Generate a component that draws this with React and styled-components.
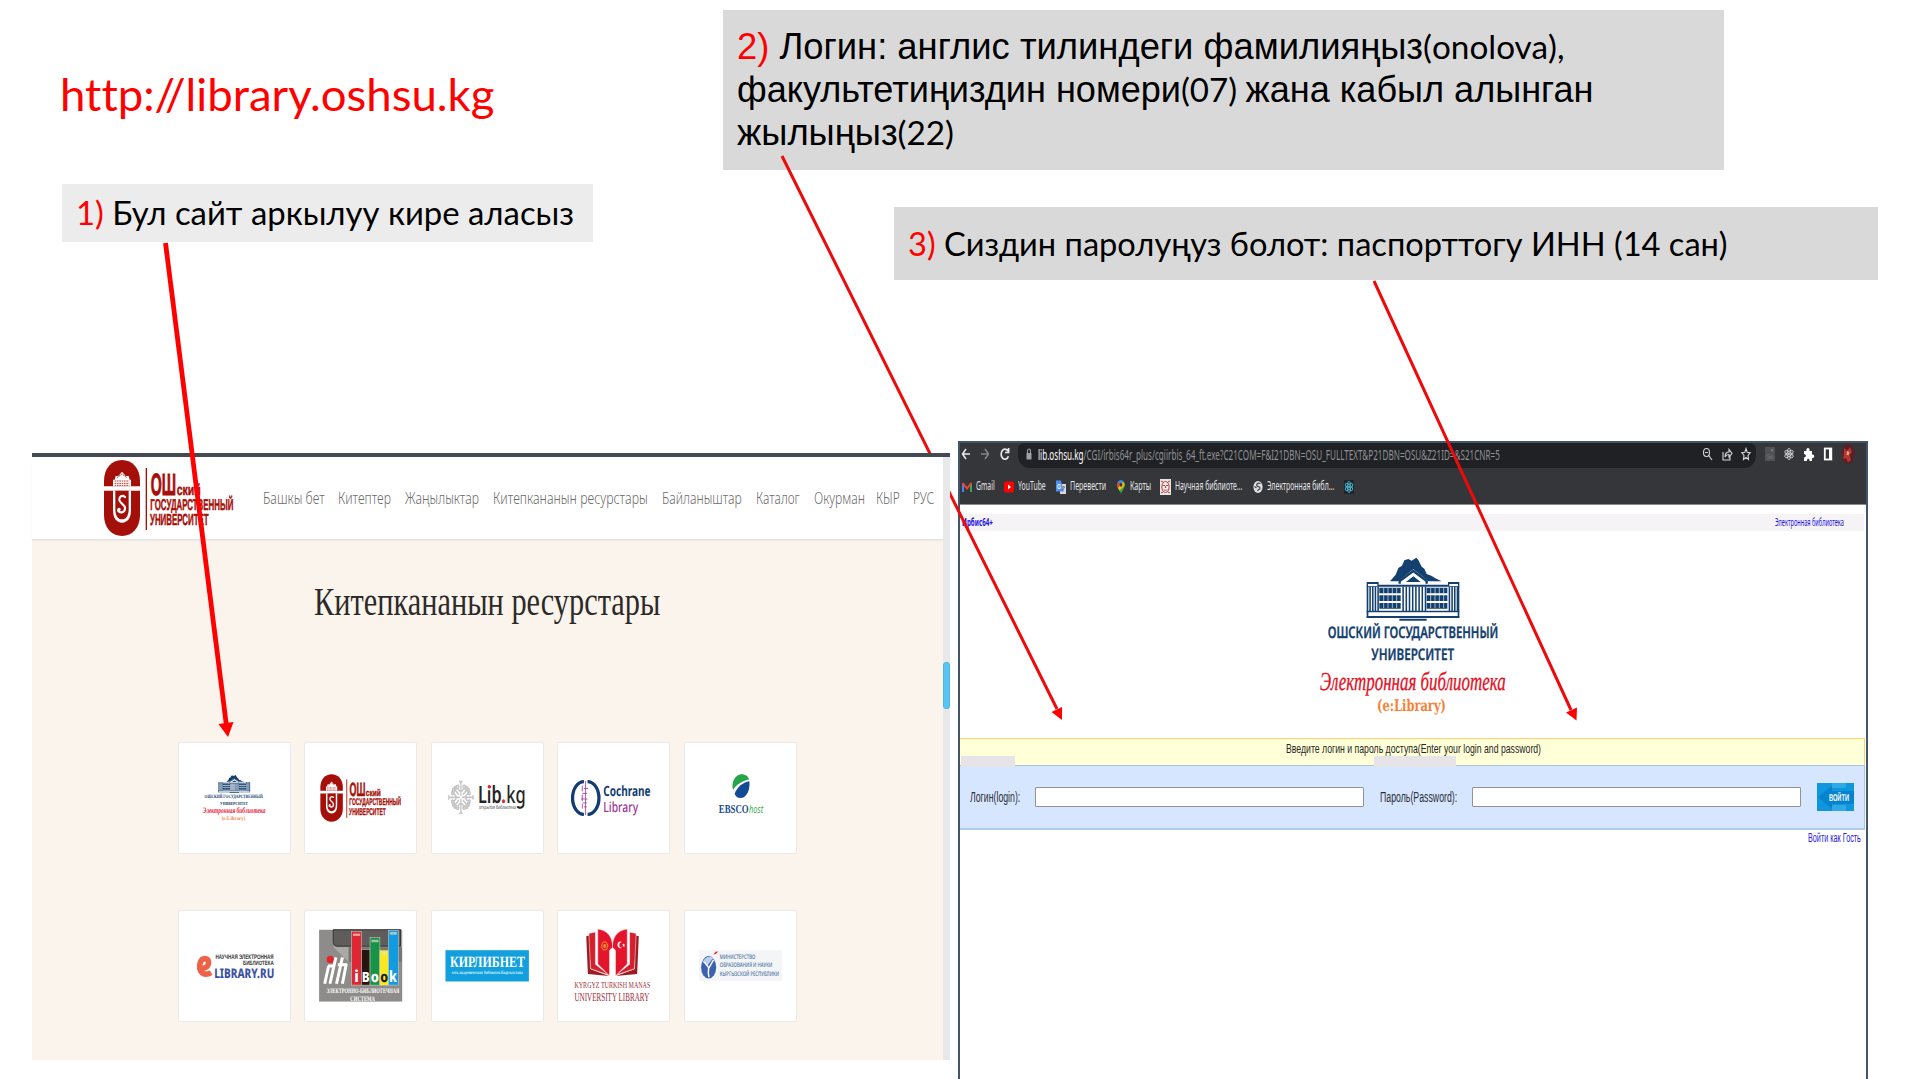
import React, { useLayoutEffect, useRef, useState } from "react";
import styled, { createGlobalStyle } from "styled-components";

const GlobalStyle = createGlobalStyle`
  * { box-sizing: border-box; }
  html, body { margin: 0; padding: 0; background: #fff; }
  svg text { text-rendering: geometricPrecision; }
`;

const calibri = `Lato, "Noto Sans", sans-serif`;
const arial = `"Liberation Sans", Arial, sans-serif`;
const noto = `"Noto Sans", sans-serif`;
const serif = `"Liberation Serif", serif`;

/* ---------- text that is squeezed to a given width ---------- */
const FitBox = styled.span`
  display: block;
  flex: none;
  width: ${(p) => p.$w}px;
  margin-left: ${(p) => p.$ml || 0}px;
  white-space: nowrap;
  overflow: visible;
`;
const FitInner = styled.span`
  display: inline-block;
  transform-origin: 0 50%;
  vertical-align: top;
`;
function Fit({ w, ml, children }) {
  const ref = useRef(null);
  const [k, setK] = useState(1);
  useLayoutEffect(() => {
    const n = ref.current.offsetWidth;
    if (n) setK(w / n);
  }, [w]);
  return (
    <FitBox $w={w} $ml={ml}>
      <FitInner ref={ref} style={{ transform: `scaleX(${k})` }}>{children}</FitInner>
    </FitBox>
  );
}

/* ---------- slide ---------- */
const Slide = styled.main`
  position: relative;
  width: 1919px;
  height: 1079px;
  overflow: hidden;
  background: #fff;
  display: flex;
  flex-direction: column;
  font-family: ${calibri};
  font-variant-ligatures: none;
  color: #000;
`;
const Top = styled.section`
  display: flex;
  height: 441px;
  flex: none;
`;
const TopLeft = styled.div`
  width: 723px;
  flex: none;
  padding: 66px 0 0 62px;
`;
const TopRight = styled.div`
  flex: 1;
  padding-top: 10px;
`;
const SiteUrl = styled.div`
  height: 118px;
  margin-left: -2px;
  color: #ff0000;
  font-size: 45px;
  line-height: 56px;
`;
const Note = styled.div`
  width: ${(p) => p.$w}px;
  height: ${(p) => p.$h}px;
  margin: ${(p) => p.$m || "0"};
  padding: ${(p) => p.$p};
  background: ${(p) => p.$bg};
  font-size: 33px;
  line-height: 43px;
`;
const Red = styled.span`color: #ff0000;`;
const Ar = styled.span`
  font-family: ${arial};
  font-size: 36px;
  line-height: 1;
`;
const Bottom = styled.section`
  display: flex;
  align-items: flex-start;
  padding-left: 32px;
  gap: 8px;
`;
const Arrows = styled.svg`
  position: absolute;
  inset: 0;
  width: 1919px;
  height: 1079px;
  z-index: ${(p) => p.$z};
  pointer-events: none;
`;

/* ---------- library site ---------- */
const Site = styled.div`
  position: relative;
  z-index: 2;
  width: 918px;
  height: 607px;
  margin-top: 12px;
  background: #fbf4ed;
  border-top: 4px solid #434a54;
  display: flex;
`;
const SitePage = styled.div`width: 911px; flex: none;`;
const SiteScroll = styled.div`
  width: 7px;
  background: #e9e8e8;
  padding-top: 205px;
`;
const Thumb = styled.div`
  height: 47px;
  border-radius: 3px;
  background: #58c6f4;
  border: 1px solid #52b4dc;
`;
const SiteHeader = styled.header`
  display: flex;
  height: 83px;
  padding-left: 68px;
  background: #fff;
  border-bottom: 1px solid #dfe1e5;
  box-shadow: 0 1px 2px rgba(0, 0, 0, 0.05);
`;
const HeaderLogo = styled.svg`
  width: 140px;
  height: 82px;
  flex: none;
`;
const Nav = styled.nav`
  display: flex;
  padding: 30px 0 0 23px;
  font-family: ${noto};
  font-weight: 300;
  font-size: 15.5px;
  line-height: 22px;
  color: #6c6c6c;
`;
const Title = styled.h1`
  margin: 0;
  padding: 39px 0 0 282px;
  height: 202px;
  font-family: ${serif};
  font-weight: 400;
  font-size: 40px;
  line-height: 46px;
  color: #2c2a28;
`;
const Cards = styled.div`
  display: grid;
  grid-template-columns: repeat(5, 113px);
  grid-auto-rows: 112px;
  column-gap: 13.4px;
  row-gap: 56px;
  padding-left: 146px;
`;
const Card = styled.div`
  background: #fff;
  border: 1px solid #ece9e6;
  border-radius: 2px;
`;
const CardArt = styled.svg`
  display: block;
  width: 111px;
  height: 110px;
`;

/* ---------- browser ---------- */
const Browser = styled.div`
  width: 910px;
  height: 660px;
  background: #fff;
  border: 2px solid #44546a;
  font-family: ${noto};
`;
const Chrome = styled.div`
  height: 62px;
  background: #35363a;
  border-bottom: 1px solid #8a8b8d;
`;
const ToolRow = styled.div`
  display: flex;
  height: 25px;
`;
const ToolSvg = styled.svg`
  height: 25px;
  width: ${(p) => p.$w}px;
  flex: none;
`;
const Address = styled.div`
  display: flex;
  width: 738px;
  flex: none;
  background: #202124;
  border-radius: 6px 6px 12px 12px;
  color: #8f9195;
  font-size: 14.5px;
  line-height: 23px;
`;
const Host = styled.span`color: #fff;`;
const AddressGap = styled.div`flex: 1;`;
const Bookmarks = styled.div`
  display: flex;
  height: 36px;
  padding-left: 2px;
  color: #e4e5e7;
  font-size: 12.5px;
  line-height: 36px;
`;
const BmIcon = styled.svg`
  width: ${(p) => p.$w || 10}px;
  height: 16px;
  margin: 10.5px ${(p) => p.$mr}px 0 ${(p) => p.$ml || 0}px;
  flex: none;
`;
const Strip = styled.div`
  display: flex;
  justify-content: space-between;
  width: 904px;
  height: 17px;
  margin-top: 9px;
  padding: 0 20px 0 2px;
  background: #f6f3f6;
  color: #1c10e0;
  font-family: ${noto};
  font-size: 10px;
  line-height: 16px;
`;
const StrongLink = styled.b`font-weight: 700;`;
const Brand = styled.div`
  height: 207px;
  padding-left: 350px;
`;
const BrandArt = styled.svg`
  display: block;
  width: 220px;
  height: 207px;
`;
const Login = styled.form`
  position: relative;
  margin: 0;
  width: 905px;
`;
const Prompt = styled.div`
  height: 27px;
  padding: 0 0 0 326px;
  border: 1px solid #ffcf70;
  border-bottom: 0;
  border-left: 0;
  background: #ffffd8;
  color: #262626;
  font-family: ${arial};
  font-size: 13.5px;
  line-height: 19px;
`;
const Fields = styled.div`
  display: flex;
  align-items: center;
  height: 65px;
  padding: 0 10px 1px 10px;
  border: 1px solid #a9c3e2;
  border-left: 0;
  border-bottom: 2px solid #b0c9f2;
  background: #d7e6ff;
  color: #2b2f36;
  font-family: ${arial};
  font-size: 14px;
  line-height: 20px;
`;
const Input = styled.input`
  width: 329px;
  height: 20px;
  margin: 0 16px 0 15px;
  padding: 0;
  flex: none;
  border: 1px solid #909397;
  border-radius: 1px;
  background: #fff;
`;
const Enter = styled.button`
  width: 37px;
  height: 28px;
  padding: 0;
  border: 0;
  background: none;
  flex: none;
`;
const Mask = styled.div`
  position: absolute;
  top: 18px;
  left: ${(p) => p.$x}px;
  width: ${(p) => p.$w}px;
  height: 11px;
  background: #e6e4e6;
`;
const Guest = styled.div`
  display: flex;
  justify-content: flex-end;
  padding: 1px 4px 0 0;
  color: #2d20d8;
  font-family: ${arial};
  font-size: 12px;
  line-height: 15px;
`;

/* squeezed svg label */
function T({ x, y, w, s, f = arial, c, b, i, k, children }) {
  return (
    <text x={x} y={y} textLength={w} lengthAdjust="spacingAndGlyphs" fontSize={s} fontFamily={f}
      fill={c} stroke={k ? c : "none"} strokeWidth={k || 0}
      fontWeight={b || 400} fontStyle={i ? "italic" : "normal"}>{children}</text>
  );
}

function OshLogo() {
  const r = "#a50f0a";
  return (
    <g>
      <path d="M252 139V122C252 85 275 60 306 60s54 25 54 62v17z" fill={r} />
      <path d="M252 152h108v74c0 37-23 62-54 62s-54-25-54-62z" fill={r} />
      <path d="M279 152h54v58c0 25-11 38-27 38s-27-13-27-38z" fill="#fff" />
      <path d="M286 152h40v55c0 21-8 31-20 31s-20-10-20-31z" fill={r} />
      <path d="M279 139v-20h5l3-11h8l11-13 11 13h9l3 11h4v20z" fill="#fff" />
      <path d="M284 123h44M284 130h44M284 136h44M291 113l15-11 15 11" stroke={r} strokeWidth="2.4" fill="none" strokeDasharray="5 2" />
      <path d="M315 171c-8-7-18-2-17 9 1 10 17 13 17 25 0 13-14 16-21 7" fill="none" stroke="#fff" strokeWidth="6.5" strokeLinecap="round" />
      <circle cx="297" cy="208" r="5" fill="#fff" />
      <rect x="377" y="84" width="4" height="186" fill={r} />
      <T x={392} y={165} w={76} s={92} c={r} b={700} k={3}>ОШ</T>
      <T x={470} y={165} w={72} s={46} c={r} b={700} k={1.5}>ский</T>
      <T x={391} y={210} w={249} s={47} c={r} b={700} k={1.5}>ГОСУДАРСТВЕННЫЙ</T>
      <T x={390} y={256} w={176} s={48} c={r} b={700} k={1.5}>УНИВЕРСИТЕТ</T>
    </g>
  );
}

function Building() {
  const n = "#14406f";
  const cols = [];
  for (let i = 0; i < 4; i++) cols.push(328 + i * 8, 566 + i * 8);
  for (let i = 0; i < 8; i++) cols.push(427 + i * 9.6);
  return (
    <g fill={n}>
      <path d="M390 124l17-20 8-20 11-7 7-16 12-4 10 5 14-9 6 7 10 20 8 6 7 16 14 5 12 8 19 9z" />
      <path d="M412 126l48-38 48 38v12h-96z" fill="#fff" />
      <path d="M419 131v-8l41-30 40 30v8" fill="none" stroke={n} strokeWidth="7" />
      <path d="M438 126l22-17 22 17z" />
      <path d="M320 126h36v8h208v-8h34v14H320z" />
      <path d="M324 132h28v6h-28zM568 132h26v6h-26z" fill="#fff" />
      <path d="M320 138h5v95h-5zM593 138h5v95h-5z" />
      {cols.map((x) => <rect key={x} x={x} y="140" width="4.6" height="74" />)}
      {[143, 166, 189].map((y) => (
        <path key={y} d={`M358 ${y}h64v17h-64zM500 ${y}h62v17h-62z`} />
      ))}
      <path d="M371 144v60M384 144v60M397 144v60M410 144v60M512 144v60M525 144v60M538 144v60M551 144v60" stroke="#fff" strokeWidth="1.8" />
      <path d="M320 212h278v5H320zM320 228h278v6H320zM418 236h82v6h-82z" />
    </g>
  );
}

function BookHalf({ flip }) {
  return (
    <g transform={flip ? "translate(736 0) scale(-1 1)" : undefined}>
      <path d="M288 708l12-3v102l57 21-64-6z" fill="#9c1c22" />
      <path d="M296 699l20-4v98l42 33-57-20z" fill="#d51f2d" stroke="#fff" strokeWidth="1.5" />
      <path d="M323 686c27 3 43 20 45 48v8l-9 8v78l-36-36z" fill="#e5142d" stroke="#fff" strokeWidth="1.5" />
    </g>
  );
}

const logos = [
  ["elib", "25 127 338 334",
    <g>
      <g transform="translate(34 209) scale(.347 .29)"><Building /></g>
      <T x={103} y={294} w={177} s={15} f={serif} c="#14406f" b={700}>ОШСКИЙ ГОСУДАРСТВЕННЫЙ</T>
      <T x={150} y={314} w={85} s={14} f={serif} c="#14406f" b={700}>УНИВЕРСИТЕТ</T>
      <T x={97} y={341} w={191} s={25} f={serif} c="#e8213c" b={700} i>Электронная библиотека</T>
      <T x={155} y={360} w={72} s={17} f={serif} c="#f5854a" b={700}>(e:Library)</T>
    </g>],
  ["osu", "404 127 338 334",
    <g transform="translate(291 184) scale(.634 .632)"><OshLogo /></g>],
  ["libkg", "784 127 338 334",
    <g>
      <g fill="none" stroke="#c3c3c3" strokeWidth="5">
        {[0, 90, 180, 270].map((a) => (
          <g key={a} transform={`translate(872 292) scale(.78 1) rotate(${a})`}>
            <path d="M0-4V-48M0-44l-6-6M0-44l6-6M0-18c-10-2-14-12-6-16M0-18c10-2 14-12 6-16M-8-36c-14-2-16 12-8 12M8-36c14-2 16 12 8 12" />
            <path d="M8-8L28-28M14-24c0-14 18-10 12 0M24-14c14 0 10-18 0-12" />
          </g>
        ))}
      </g>
      <T x={924} y={309} w={72} s={72} f={noto} c="#252525" b={600}>Lib</T>
      <circle cx="959" cy="260" r="5" fill="#e23" />
      <T x={995} y={309} w={14} s={72} f={noto} c="#e0202c" b={700}>.</T>
      <T x={1010} y={309} w={59} s={72} f={noto} c="#252525" b={500}>kg</T>
      <T x={927} y={328} w={113} s={15} f={noto} c="#444">открытая библиотека</T>
    </g>],
  ["cochrane", "202 127 338 334",
    <g>
      <path d="M281 244a34 49 0 0 0 0 100M292 244a34 49 0 0 1 0 100" fill="none" stroke="#123c72" strokeWidth="10" />
      <path d="M286 242v104M276 256v18M276 284v20M276 312v14M281 265h13M276 280h15M272 297h20M277 309h12M281 321h9" stroke="#a53d9a" strokeWidth="2.6" fill="none" />
      <T x={340} y={287} w={144} s={43} f={noto} c="#123c72" b={700}>Cochrane</T>
      <T x={340} y={336} w={106} s={43} f={noto} c="#9a3596" b={500}>Library</T>
    </g>],
  ["ebsco", "581 127 338 334",
    <g>
      <path d="M727 270c-6-26 8-48 27-48 12 0 20 7 22 16-17 2-39 15-49 32z" fill="#27a34b" />
      <path d="M732 281c9-22 24-34 45-38 3 27-9 51-27 51-9 0-15-5-18-13z" fill="#124a96" />
      <T x={684} y={339} w={91} s={37} f={serif} c="#1c4e8c" b={700}>EBSCO</T>
      <T x={776} y={339} w={43} s={33} f={noto} c="#45ab50" i>host</T>
    </g>],
  ["elibrary", "25 631 338 334",
    <g>
      <path d="M84 806c18 2 32-5 31-20-1-14-20-14-25 1-8 27 9 44 33 31" fill="none" stroke="#ee6249" strokeWidth="17" />
      <T x={136} y={777} w={177} s={20} c="#333" b={700}>НАУЧНАЯ ЭЛЕКТРОННАЯ</T>
      <T x={220} y={796} w={93} s={19} c="#333" b={700}>БИБЛИОТЕКА</T>
      <T x={132} y={834} w={183} s={40} f={noto} c="#3d51a4" b={800}>LIBRARY.RU</T>
    </g>],
  ["ibook", "404 631 338 334",
    <g>
      <rect x="447" y="688" width="253" height="218" fill="#8d8c8a" />
      <path d="M447 688h44v54l46 44v-46h162v-52H447z" fill="#aaa9a6" />
      <path d="M490 688h205v50H502q-12 0-12-14z" fill="#5f5d5c" stroke="#343332" strokeWidth="3" />
      <path d="M537 742h162v44H537z" fill="#777573" />
      <g stroke="#ddd9ce" strokeWidth="1.5">
        <rect x="546" y="693" width="30" height="163" fill="#df2733" />
        <rect x="576" y="748" width="26" height="108" fill="#251612" />
        <rect x="602" y="712" width="30" height="144" fill="#179348" />
        <rect x="632" y="751" width="26" height="105" fill="#fbe821" />
        <rect x="658" y="690" width="30" height="166" fill="#119be0" />
      </g>
      <path d="M550 699h22v8h-22zM606 718h22v8h-22zM636 757h18v7h-18zM662 695h22v8h-22z" fill="#e5e1d0" opacity=".65" />
      <circle cx="481" cy="778" r="11" fill="#e4232d" />
      <path d="M476 798l-12 54M498 772l-18 80M518 772l-18 80M530 790l-12 62M474 798h20M504 794h28" stroke="#fff" strokeWidth="9" fill="none" />
      <T x={554} y={847} w={14} s={50} f={noto} c="#fff" b={800}>i</T>
      <T x={577} y={847} w={24} s={43} f={noto} c="#fff" b={800}>B</T>
      <T x={604} y={847} w={25} s={45} f={noto} c="#fff" b={800}>o</T>
      <T x={633} y={847} w={24} s={45} f={noto} c="#1b1b1b" b={800}>o</T>
      <T x={660} y={847} w={24} s={48} f={noto} c="#fff" b={800}>k</T>
      <T x={469} y={879} w={222} s={21} f={serif} c="#fff" b={700}>ЭЛЕКТРОННО-БИБЛИОТЕЧНАЯ</T>
      <T x={542} y={903} w={75} s={21} f={serif} c="#fff" b={700}>СИСТЕМА</T>
    </g>],
  ["kirlibnet", "784 631 338 334",
    <g>
      <rect x="825" y="750" width="254" height="95" fill="#129fdd" />
      <T x={839} y={802} w={228} s={48} f={serif} c="#fff" b={700}>КИРЛИБНЕТ</T>
      <T x={844} y={823} w={216} s={15} f={serif} c="#d9f1fc" b={700}>сеть академических библиотек Кыргызстана</T>
    </g>],
  ["manas", "202 631 338 334",
    <g>
      <BookHalf />
      <BookHalf flip />
      <ellipse cx="344" cy="737" rx="9" ry="12" fill="none" stroke="#f4a133" strokeWidth="4" strokeDasharray="3 1.5" />
      <ellipse cx="344" cy="737" rx="4" ry="6" fill="#f4a133" />
      <path d="M395 725c-14-6-16 22 0 18-9-1-9-17 0-18z" fill="#fff" stroke="#fff" />
      <path d="M402 729l1 4h4l-3 3 1 4-3-2-3 2 1-4-3-3h4z" fill="#fff" />
      <T x={252} y={866} w={231} s={28} f={serif} c="#9d2c35">KYRGYZ TURKISH MANAS</T>
      <T x={252} y={905} w={228} s={37} f={serif} c="#9d2c35">UNIVERSITY LIBRARY</T>
    </g>],
  ["ministry", "581 631 338 334",
    <g>
      <rect x="624" y="750" width="253" height="93" fill="#f4f5f7" />
      <ellipse cx="653" cy="802" rx="23" ry="34" fill="#3b62ad" />
      <path d="M634 786c9-16 22-20 33-12l-17 22z" fill="#b9cfec" />
      <path d="M640 786l14 18 14-25M653 804c-2 14-1 22 1 28" stroke="#fff" strokeWidth="4.500" fill="none" />
      <path d="M667 764l7-9 8-1-6 7z" fill="#e0343b" />
      <T x={687} y={777} w={108} s={19} f={noto} c="#47719e" b={500}>МИНИСТЕРСТВО</T>
      <T x={687} y={802} w={160} s={19} f={noto} c="#47719e" b={500}>ОБРАЗОВАНИЯ И НАУКИ</T>
      <T x={687} y={827} w={180} s={19} f={noto} c="#47719e" b={500}>КЫРГЫЗСКОЙ РЕСПУБЛИКИ</T>
    </g>],
];

const nav = [
  ["Башкы бет", 62, 0], ["Китептер", 53, 13], ["Жаңылыктар", 74, 14],
  ["Китепкананын ресурстары", 155, 14], ["Байланыштар", 80, 14],
  ["Каталог", 44, 14], ["Окурман", 51, 14], ["КЫР", 24, 11], ["РУС", 21, 13],
];

const Atom = ({ c }) => (
  <g fill="none" stroke={c} strokeWidth=".8">
    {[0, 60, 120].map((a) => <ellipse key={a} rx="5" ry="2" transform={`rotate(${a + 30})`} />)}
    <circle r=".8" fill={c} />
  </g>
);

export default function App() {
  return (
    <Slide>
      <GlobalStyle />
      <Top>
        <TopLeft>
          <SiteUrl><Fit w={434}>http://library.oshsu.kg</Fit></SiteUrl>
          <Note $w={531} $h={58} $bg="#ececec" $p="7px 0 0 14px">
            <Fit w={498}><Red>1)</Red> Бул сайт аркылуу кире аласыз</Fit>
          </Note>
        </TopLeft>
        <TopRight>
          <Note $w={1001} $h={160} $bg="#d9d9d9" $p="15px 0 0 14px">
            <Fit w={827}><Ar><Red>2)</Red> Логин: англис тилиндеги фамилияңыз</Ar>(onolova),</Fit>
            <Fit w={856}><Ar>факультетиңиздин номери</Ar>(07) <Ar>жана кабыл алынган</Ar></Fit>
            <Fit w={217}><Ar>жылыңыз</Ar>(22)</Fit>
          </Note>
          <Note $w={984} $h={73} $bg="#d9d9d9" $m="37px 0 0 171px" $p="15px 0 0 14px">
            <Fit w={819}><Red>3)</Red> Сиздин паролуңуз болот: паспорттогу ИНН (14 сан)</Fit>
          </Note>
        </TopRight>
      </Top>

      <Bottom>
        <Site>
          <SitePage>
            <SiteHeader>
              <HeaderLogo viewBox="240 51 420 246"><OshLogo /></HeaderLogo>
              <Nav>{nav.map(([t, w, ml]) => <Fit key={t} w={w} ml={ml}>{t}</Fit>)}</Nav>
            </SiteHeader>
            <Title><Fit w={346}>Китепкананын ресурстары</Fit></Title>
            <Cards>
              {logos.map(([id, vb, art]) => (
                <Card key={id}><CardArt viewBox={vb} preserveAspectRatio="none">{art}</CardArt></Card>
              ))}
            </Cards>
          </SitePage>
          <SiteScroll><Thumb /></SiteScroll>
        </Site>

        <Browser>
          <Chrome>
            <ToolRow>
              <ToolSvg $w={58} viewBox="0 0 58 25">
                <g fill="none" strokeWidth="1.5">
                  <path d="M10 11H3M6 6l-3.500 5L6 16" stroke="#e8eaed" />
                  <path d="M21 11h7M25 6l3.500 5L25 16" stroke="#84868a" />
                  <path d="M48 8.200a3.800 5 0 1 0 .4 5M48.600 5v4.500H45" stroke="#e8eaed" strokeWidth="1.700" />
                </g>
              </ToolSvg>
              <Address>
                <ToolSvg $w={20} viewBox="0 0 20 25">
                  <rect x="8.500" y="10" width="5" height="6.500" fill="#9aa0a6" />
                  <path d="M9.500 10V8a1.500 2 0 0 1 3 0v2" fill="none" stroke="#9aa0a6" strokeWidth="1.100" />
                </ToolSvg>
                <Fit w={462}><Host>lib.oshsu.kg</Host>/CGI/irbis64r_plus/cgiirbis_64_ft.exe?C21COM=F&amp;I21DBN=OSU_FULLTEXT&amp;P21DBN=OSU&amp;Z21ID=&amp;S21CNR=5</Fit>
                <AddressGap />
                <ToolSvg $w={60} viewBox="0 0 60 25">
                  <g fill="none" stroke="#d5d7da" strokeWidth="1.100">
                    <ellipse cx="10.500" cy="9.500" rx="3" ry="4" />
                    <path d="M12.700 12.500L16 17M9 9.500h3" />
                    <path d="M27 9v8h7v-4M29 14c0-4 2-5 4-5V6.500l3 4-3 3.500v-2.500c-2 0-3 .5-4 2.500z" />
                    <path d="M50 5.500l1.200 3.800 3 .4-2.200 2.700.5 4-2.500-2-2.500 2 .5-4-2.200-2.700 3-.4z" />
                  </g>
                </ToolSvg>
              </Address>
              <ToolSvg $w={108} viewBox="0 0 108 25">
                <rect x="9" y="4" width="10" height="14" fill="#505154" />
                <T x={10.5} y={16} w={7} s={7} c="#777">Se</T>
                <rect x="15" y="6" width="2" height="2.500" fill="#777" />
                <g transform="translate(33 11) scale(.95 1.150)"><Atom c="#d8dadd" /></g>
                <path d="M48 8h2.500c-1-4 4-4 3 0H56v3.500c3-.5 3 4 0 3.500V18h-2.500c.5-3-3-3-2.500 0H48v-3.500c2.500 0 2.500-3.500 0-3.500z" fill="#fff" />
                <rect x="68.800" y="5.500" width="6.500" height="11" fill="none" stroke="#fff" strokeWidth="1.800" />
                <rect x="73" y="5" width="3" height="12" fill="#fff" />
                <ellipse cx="92" cy="11" rx="6.500" ry="10" fill="#5b2023" />
                <path d="M88 5l3 3 3-4 2 5-2.500 3 1.500 5-3 2.500-2-4.500-3 1 1-5z" fill="#b5352f" />
                <path d="M91 8l2.500 1-1 3.500-2-1z" fill="#e8a794" />
              </ToolSvg>
            </ToolRow>
            <Bookmarks>
              <BmIcon $mr={4} viewBox="0 0 10 16">
                <path d="M1 13V4.500" stroke="#4285f4" strokeWidth="2" />
                <path d="M9 13V4.500" stroke="#34a853" strokeWidth="2" />
                <path d="M.5 4L5 9.500 9.500 4" fill="none" stroke="#ea4335" strokeWidth="2" />
              </BmIcon>
              <Fit w={18.5}>Gmail</Fit>
              <BmIcon $ml={9.5} $mr={4} viewBox="0 0 10 16">
                <rect y="2.500" width="10" height="11" rx="2" fill="#f00" /><path d="M4 5.500l3 2.500-3 2.500z" fill="#fff" />
              </BmIcon>
              <Fit w={28}>YouTube</Fit>
              <BmIcon $ml={10} $mr={4} viewBox="0 0 10 16">
                <rect x="4" y="5" width="6" height="10" fill="#d6d9de" />
                <path d="M0 1.500h5l2.500 11H0z" fill="#4d8df5" />
                <T x={1} y={9.5} w={4} s={7} c="#fff" b={700}>G</T>
                <path d="M6 8h3M7.500 7v1M6.500 12l2-4" stroke="#667" strokeWidth=".8" />
              </BmIcon>
              <Fit w={36}>Перевести</Fit>
              <BmIcon $ml={10} $mr={4} viewBox="0 0 10 16">
                <path d="M5 15C4 11 1.200 10 1.200 5.800 1.200 3 3 1.300 5 1.300s3.800 1.700 3.800 4.500C8.800 10 6 11 5 15z" fill="#34a853" />
                <path d="M1.500 4C2 2.300 3.300 1.300 5 1.300L7.800 3 3 8.500z" fill="#4285f4" />
                <path d="M1.300 5L3 3l1.500 3L2 9C1.400 8 1.100 6.500 1.300 5z" fill="#ea4335" />
                <path d="M2 9l5-6 1.700 2C8.500 8 5 10 3.500 11.500z" fill="#fbbc04" />
                <ellipse cx="5" cy="5.800" rx="1.400" ry="1.900" fill="#35363a" />
              </BmIcon>
              <Fit w={21}>Карты</Fit>
              <BmIcon $ml={9} $mr={4} $w={11} viewBox="0 0 11 16">
                <rect width="11" height="16" fill="#e9e4e0" />
                <ellipse cx="5.500" cy="8" rx="3.600" ry="5.500" fill="#f6ecea" stroke="#b33b3b" strokeWidth="1" />
                <path d="M3 6.500h2M6 6.500h2M3.700 10.500c1 1 2.600 1 3.600 0M5.500 7v2M1 2l2 1M10 2L8 3M1 14l2-1M10 14l-2-1" stroke="#8d3434" strokeWidth=".9" fill="none" />
              </BmIcon>
              <Fit w={67.5}>Научная библиоте...</Fit>
              <BmIcon $ml={10} $mr={4} viewBox="0 0 10 16">
                <ellipse cx="5" cy="8" rx="4.600" ry="6" fill="#dfe1e3" />
                <path d="M7.500 4.500C5 3.500 3 5 4 7c1 1 3 0 3 2s-2 1-2.500 3M1.500 7.500l2 1.500" stroke="#45464a" strokeWidth="1.300" fill="none" />
              </BmIcon>
              <Fit w={67.5}>Электронная библ...</Fit>
              <BmIcon $ml={10} $mr={0} viewBox="0 0 10 16">
                <rect y="1" width="10" height="14" rx="1" fill="#20232a" />
                <g transform="translate(5 8) scale(.85 1.150)"><Atom c="#4fc3e0" /></g>
              </BmIcon>
            </Bookmarks>
          </Chrome>
          <Strip>
            <StrongLink><Fit w={31}>Ирбис64+</Fit></StrongLink>
            <Fit w={69}>Электронная библиотека</Fit>
          </Strip>
          <Brand>
            <BrandArt viewBox="150 -27 660 621">
              <Building />
              <T x={203} y={294} w={512} s={48} f={noto} c="#14406f" b={600} k={1}>ОШСКИЙ ГОСУДАРСТВЕННЫЙ</T>
              <T x={334} y={361} w={248} s={48} f={noto} c="#14406f" b={600} k={1}>УНИВЕРСИТЕТ</T>
              <T x={180} y={451} w={557} s={78} f={serif} c="#e3101f" i k={1}>Электронная библиотека</T>
              <T x={351} y={514} w={207} s={48} f={`"DejaVu Serif", serif`} c="#f58236" b={700}>(e:Library)</T>
            </BrandArt>
          </Brand>
          <Login onSubmit={(e) => e.preventDefault()}>
            <Prompt><Fit w={255}>Введите логин и пароль доступа(Enter your login and password)</Fit></Prompt>
            <Fields>
              <Fit w={50}>Логин(login):</Fit>
              <Input />
              <Fit w={77}>Пароль(Password):</Fit>
              <Input />
              <Enter>
                <svg width="37" height="28" viewBox="0 0 37 28">
                  <rect width="37" height="28" fill="#0f96dc" />
                  <path d="M1 14L15 3v5h22v13H15v5z" fill="#0583cf" />
                  <path d="M15 0h14v5H15zM15 22h14v6H15z" fill="#2ea9e6" />
                  <T x={12} y={18} w={20} s={10} c="#fff" b={700}>ВОЙТИ</T>
                </svg>
              </Enter>
            </Fields>
            <Mask $x={1} $w={54} />
            <Mask $x={414} $w={82} />
            <Guest><Fit w={53}>Войти как Гость</Fit></Guest>
          </Login>
        </Browser>
      </Bottom>

      <Arrows $z={1} viewBox="0 0 1919 1079">
        <g stroke="#ee0a0a" strokeWidth="3" fill="#ff0000">
          <path d="M782 156L1057 709M1374 281L1571 710" />
          <path stroke="none" d="M1062 720l-10.500-8 10.500-5zM1576.500 720.500l-10.500-8 11-5z" />
        </g>
      </Arrows>
      <Arrows $z={3} viewBox="0 0 1919 1079">
        <path d="M165.500 243L226.500 726" stroke="#ff0000" strokeWidth="4.800" />
        <path d="M228 737l-9.500-13 15-2z" fill="#ff0000" />
      </Arrows>
    </Slide>
  );
}
